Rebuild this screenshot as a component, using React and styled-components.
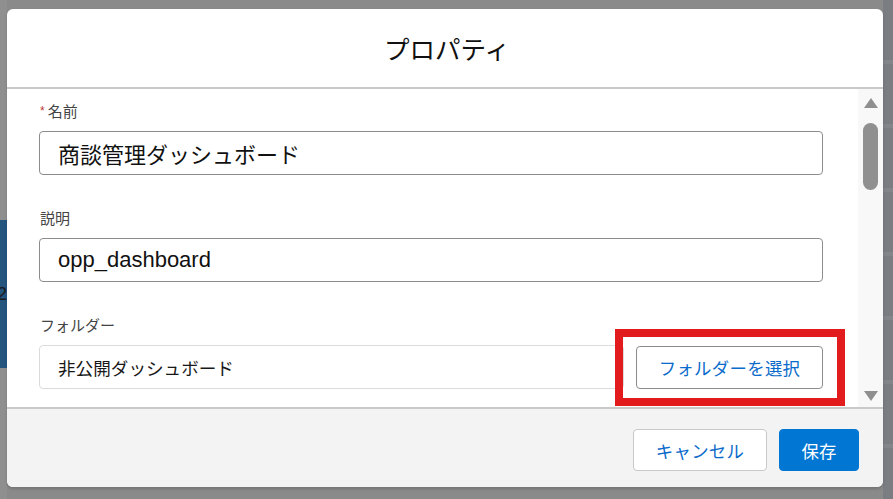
import React from "react";
import styled, { createGlobalStyle } from "styled-components";

const GlobalStyle = createGlobalStyle`
  html, body {
    margin: 0;
    padding: 0;
    width: 893px;
    height: 499px;
    overflow: hidden;
    font-family: "Liberation Sans", "Noto Sans CJK JP", sans-serif;
  }
  * {
    box-sizing: border-box;
  }
`;

export default function App() {
  return (
    <>
      <GlobalStyle />
      <Page>
        <Backdrop>
          <LeftStrip>
            <BlueCard>2</BlueCard>
          </LeftStrip>
          <RightStrip />
        </Backdrop>
        <Modal>
          <Header>プロパティ</Header>
          <Body>
            <Content>
              <Field>
                <Label>
                  <Required>*</Required>名前
                </Label>
                <TextInput>商談管理ダッシュボード</TextInput>
              </Field>
              <Field>
                <Label>説明</Label>
                <TextInput>opp_dashboard</TextInput>
              </Field>
              <Field>
                <Label>フォルダー</Label>
                <FolderRow>
                  <ReadOnlyBox>非公開ダッシュボード</ReadOnlyBox>
                  <Highlight>
                    <OutlineButton $wide>フォルダーを選択</OutlineButton>
                  </Highlight>
                </FolderRow>
              </Field>
            </Content>
            <Scrollbar>
              <Arrow />
              <Thumb />
              <Spacer />
              <Arrow $down />
            </Scrollbar>
          </Body>
          <Footer>
            <OutlineButton>キャンセル</OutlineButton>
            <BrandButton>保存</BrandButton>
          </Footer>
        </Modal>
      </Page>
    </>
  );
}

const Page = styled.div`
  position: relative;
  width: 893px;
  height: 499px;
  background: #8a8a8a;
  padding: 9px 10px 12px 7px;
  display: flex;
`;

const Backdrop = styled.div`
  position: absolute;
  inset: 0;
  display: flex;
  justify-content: space-between;
`;

const LeftStrip = styled.div`
  width: 7px;
  padding-top: 220px;
  background: #8f8f8f;
`;

const BlueCard = styled.div`
  height: 148px;
  background: #23557f;
  color: #1a1a1a;
  font-size: 18px;
  line-height: 148px;
  overflow: hidden;
  text-indent: -3px;
`;

const RightStrip = styled.div`
  width: 10px;
  background: repeating-linear-gradient(
    180deg,
    #7a7e83 0px,
    #7a7e83 60px,
    #82868a 60px,
    #82868a 64px
  );
`;

const Modal = styled.div`
  position: relative;
  width: 876px;
  height: 478px;
  background: #ffffff;
  border-radius: 6px;
  overflow: hidden;
  display: flex;
  flex-direction: column;
  box-shadow: 0 2px 3px rgba(0, 0, 0, 0.16);
`;

const Header = styled.div`
  height: 80px;
  flex: none;
  border-bottom: 2px solid #c9c9c9;
  display: flex;
  align-items: center;
  justify-content: center;
  padding: 0 0 2px 4px;
  font-size: 25.5px;
  color: #111111;
`;

const Body = styled.div`
  flex: 1;
  display: flex;
  min-height: 0;
`;

const Content = styled.div`
  flex: 1;
  padding: 12px 35px 0 32px;
  display: flex;
  flex-direction: column;
  gap: 33px;
`;

const Field = styled.div`
  display: flex;
  flex-direction: column;
  gap: 8px;
`;

const Label = styled.div`
  height: 22px;
  font-size: 15px;
  line-height: 22px;
  color: #444444;
  display: flex;
  align-items: center;
  padding-left: 1px;
`;

const Required = styled.span`
  color: #c23934;
  font-size: 12px;
  margin-right: 3px;
  position: relative;
  top: -1px;
`;

const TextInput = styled.div`
  height: 44px;
  border: 1px solid #8c8c8c;
  border-radius: 4px;
  padding: 0 18px;
  display: flex;
  align-items: center;
  font-size: 22px;
  color: #111111;
`;

const FolderRow = styled.div`
  display: flex;
  align-items: center;
  gap: 12px;
`;

const ReadOnlyBox = styled.div`
  flex: 1;
  height: 44px;
  border: 1px solid #dddbda;
  border-radius: 4px;
  padding: 0 18px;
  display: flex;
  align-items: center;
  font-size: 17.6px;
  color: #181818;
`;

const Highlight = styled.div`
  position: relative;
  &::after {
    content: "";
    position: absolute;
    left: -21px;
    right: -22px;
    top: -17px;
    bottom: -17px;
    border: 8px solid #e21c1c;
    pointer-events: none;
  }
`;

const OutlineButton = styled.button`
  height: ${(p) => (p.$wide ? "43px" : "42px")};
  width: ${(p) => (p.$wide ? "187px" : "134px")};
  border: 1px solid ${(p) => (p.$wide ? "#8c8c8c" : "#c9c9c9")};
  border-radius: 4px;
  background: #ffffff;
  color: #0b6bcb;
  font-family: inherit;
  font-size: 17.4px;
  letter-spacing: 0.3px;
  padding: 0;
  cursor: pointer;
`;

const BrandButton = styled.button`
  height: 42px;
  width: 80px;
  border: 1px solid #0176d3;
  border-radius: 4px;
  background: #0176d3;
  color: #ffffff;
  font-family: inherit;
  font-size: 17.4px;
  padding: 0;
  cursor: pointer;
`;

const Scrollbar = styled.div`
  width: 25px;
  background: #f8f8f8;
  display: flex;
  flex-direction: column;
  align-items: flex-start;
  padding: 9px 0 6px 5px;
`;

const Arrow = styled.div`
  width: 0;
  height: 0;
  margin-left: 1px;
  border-left: 7px solid transparent;
  border-right: 7px solid transparent;
  ${(p) =>
    p.$down
      ? "border-top: 10px solid #8f8f8f;"
      : "border-bottom: 10px solid #8f8f8f;"}
`;

const Thumb = styled.div`
  width: 15px;
  height: 67px;
  margin-top: 15px;
  border-radius: 8px;
  background: #909090;
`;

const Spacer = styled.div`
  flex: 1;
`;

const Footer = styled.div`
  height: 80px;
  flex: none;
  border-top: 2px solid #c9c9c9;
  background: #f3f3f3;
  display: flex;
  justify-content: flex-end;
  align-items: flex-start;
  gap: 12px;
  padding: 20px 24px 0 0;
`;
